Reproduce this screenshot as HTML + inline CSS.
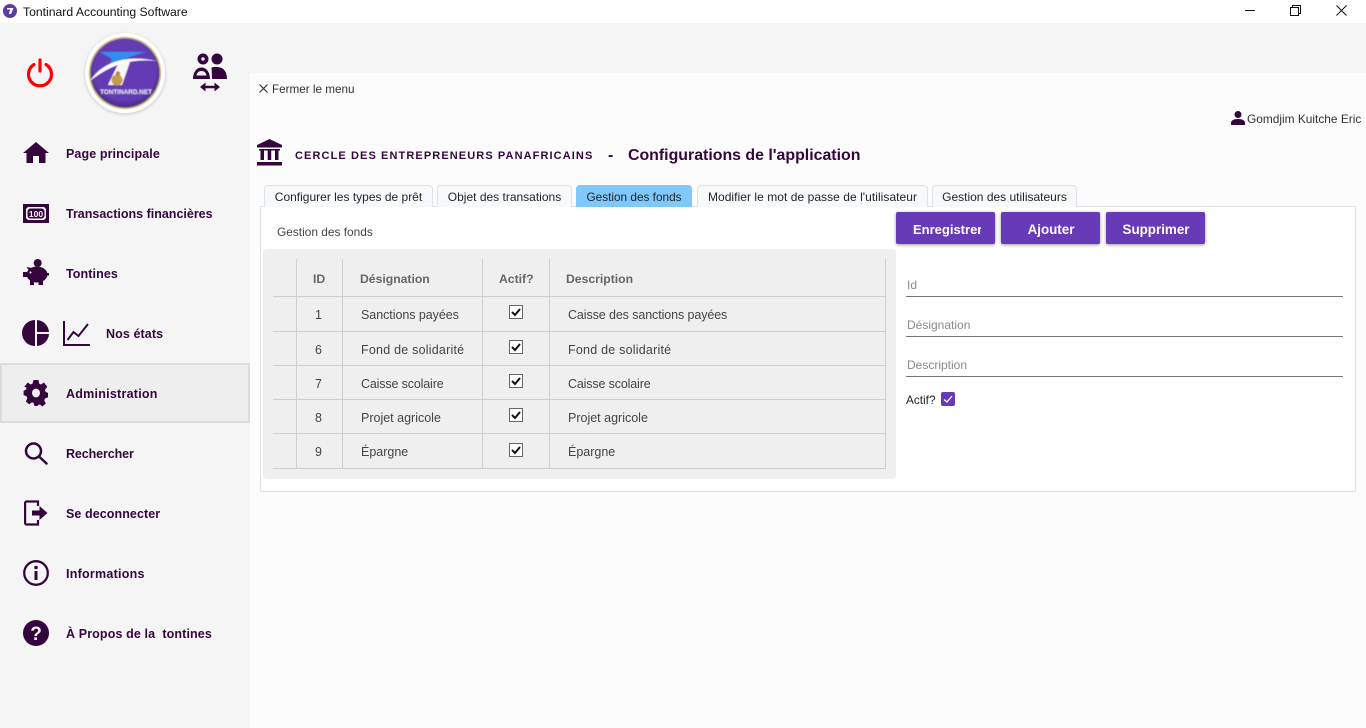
<!DOCTYPE html>
<html lang="fr"><head><meta charset="utf-8"><title>Tontinard Accounting Software</title>
<style>
*{box-sizing:border-box}
html,body{margin:0;padding:0;width:1366px;height:728px;overflow:hidden;background:#fcfcfd;font-family:"Liberation Sans",sans-serif;}
.a{position:absolute;white-space:nowrap}
svg{position:absolute;display:block;overflow:visible}
.nav{position:absolute;left:66px;font-size:12.5px;font-weight:700;color:#35063e;line-height:16px;white-space:nowrap}
.tab{position:absolute;top:185px;height:22px;border:1px solid #dee2e6;border-bottom:0;border-radius:4px 4px 0 0;background:#f8f9fb;font-size:12px;line-height:22px;text-align:center;color:#212529;white-space:nowrap}
.btn{position:absolute;top:212px;height:32px;width:99px;background:#673ab7;color:#fff;border-radius:2px;box-shadow:0 1px 3px rgba(0,0,0,.4);font-size:13.4px;font-weight:700;line-height:36px;text-align:center;overflow:hidden;padding-left:1px}
.hl{position:absolute;height:1px;background:#cfcfcf;left:273px;width:613px}
.vl{position:absolute;width:1px;background:#cfcfcf;top:259px;height:210px}
.th{position:absolute;top:271px;font-size:12.2px;font-weight:700;color:#666;line-height:16px;white-space:nowrap}
.td{position:absolute;font-size:12.5px;color:#444;line-height:16px;white-space:nowrap}
.lbl{position:absolute;left:907px;font-size:12px;color:#8a8a8a;line-height:16px}
.ul{position:absolute;left:906px;width:437px;height:1px;background:#777}
</style></head><body>

<!-- title bar -->
<div class="a" style="left:0;top:0;width:1366px;height:23px;background:#fff"></div>
<svg style="left:3px;top:4px" width="14" height="14" viewBox="0 0 14 14"><circle cx="7" cy="7" r="7" fill="#5d3aa8"/><path d="M4 4h6.500L8 10H5.800L7.200 5.500H4z" fill="#fff"/></svg>
<div class="a" style="left:23px;top:4px;font-size:12.2px;line-height:16px;color:#111">Tontinard Accounting Software</div>
<div class="a" style="left:1245px;top:10px;width:10px;height:1px;background:#111"></div>
<svg style="left:1290px;top:5px" width="11" height="11" viewBox="0 0 11 11" fill="none" stroke="#111"><rect x=".5" y="2.500" width="8" height="8" fill="#fff"/><path d="M2.500 2.500V.5h8v8H8.500"/></svg>
<svg style="left:1336px;top:5px" width="11" height="11" viewBox="0 0 11 11" fill="none" stroke="#111"><path d="M.5.5l10 10M10.500.5l-10 10"/></svg>

<!-- sidebar & top strip -->
<div class="a" style="left:0;top:23px;width:250px;height:705px;background:#f5f5f5"></div>
<div class="a" style="left:250px;top:23px;width:1116px;height:50px;background:#f5f5f5"></div>

<!-- power -->
<svg style="left:26px;top:58px" width="28" height="28" viewBox="0 0 28 28" fill="none" stroke="#f00" stroke-width="3.200" stroke-linecap="round"><path d="M14 2v11"/><path d="M8 6.500a11.500 11.500 0 1 0 12 0"/></svg>

<!-- logo -->
<svg style="left:84px;top:32px" width="84" height="84" viewBox="0 0 84 84">
<defs>
<filter id="b" x="-10%" y="-10%" width="120%" height="120%"><feGaussianBlur stdDeviation="1.200"/></filter>
<filter id="c" x="-5%" y="-5%" width="110%" height="110%"><feGaussianBlur stdDeviation=".45"/></filter>
<radialGradient id="g" cx=".5" cy=".45" r=".55"><stop offset=".8" stop-color="#653bb5"/><stop offset="1" stop-color="#4a2c80"/></radialGradient>
</defs>
<circle cx="41" cy="42" r="41" fill="#d8d8d8" filter="url(#b)"/>
<circle cx="41" cy="41" r="40" fill="#fff"/>
<g filter="url(#c)">
<circle cx="41" cy="41" r="36" fill="#bdb26b"/>
<circle cx="41" cy="41" r="34.500" fill="url(#g)"/>
<path d="M16 20L62 20C50 23 38 27 25 35L28 27Z" fill="#2f8fef"/>
<path d="M6 49C18 31 40 22 73 29C46 26 26 33 6 49z" fill="#fff"/>
<path d="M35 30L46 30L38 53L24 53Z" fill="#f8f8f8"/>
<ellipse cx="33" cy="48" rx="5.500" ry="5.500" fill="#c89a4c"/><circle cx="34" cy="41.500" r="2.200" fill="#b68236"/>
<text x="16" y="62" font-family="Liberation Sans" font-size="6" font-weight="700" fill="#e8e6f0" textLength="52" lengthAdjust="spacingAndGlyphs">TONTINARD.NET</text>
</g>
</svg>

<!-- users swap -->
<svg style="left:193px;top:54px" width="34" height="38" viewBox="0 0 34 38" fill="#35063e">
<path fill-rule="evenodd" d="M10 -.5a5.500 5.500 0 1 0 0 11A5.500 5.500 0 0 0 10 -.5zm0 3.800a1.700 1.700 0 1 1 0 3.400 1.700 1.700 0 0 1 0-3.400z"/>
<circle cx="24" cy="5" r="5.500"/>
<path fill-rule="evenodd" d="M0 25C0 17.500 4 13.500 8.500 13.500S17 17.500 17 25zM3.500 21.500h10c-.5-3-2.500-4.500-5-4.500s-4.500 1.500-5 4.500z"/>
<path d="M18.500 13.500c4-1.200 9-.8 12 1.700 2.200 2 3.500 5.500 3.500 9.800H19c0-4.500-.3-8-.5-11.500z"/>
<path d="M7 33l5.500-4.500v3.200h9v-3.200L27 33l-5.500 4.500v-3.200h-9v3.200z"/>
</svg>

<!-- nav icons -->
<svg style="left:23px;top:142px" width="26" height="21" viewBox="0 0 26 21" fill="#35063e"><path d="M13 0L0 11h3.500v10h6.500v-7h6v7h6.500V11H26z"/></svg>
<svg style="left:23px;top:204px" width="26" height="19" viewBox="0 0 26 19"><rect width="26" height="19" fill="#35063e"/><path d="M5 3h16l2 2v9l-2 2H5l-2-2V5z" fill="#f5f5f5"/><rect x="4.500" y="4.500" width="17" height="10" rx="3" fill="#35063e"/><text x="13" y="13" text-anchor="middle" font-family="Liberation Sans" font-size="8.500" font-weight="700" fill="#f5f5f5">100</text></svg>
<svg style="left:23px;top:259px" width="26" height="27" viewBox="0 0 26 27" fill="#35063e"><circle cx="14.700" cy="4" r="4"/><ellipse cx="14" cy="15.500" rx="10.500" ry="8"/><rect x="0" y="13" width="5" height="5"/><rect x="22" y="14" width="4" height="2.500"/><rect x="7" y="20" width="4" height="6"/><rect x="15.500" y="20" width="4.500" height="6"/><path d="M3.500 8l5.500 1-2 4z"/><circle cx="7.500" cy="13.500" r="1" fill="#f5f5f5"/></svg>
<svg style="left:23px;top:320px" width="26" height="26" viewBox="0 0 26 26" fill="#35063e"><path d="M12 0v26A13 13 0 0 1 12 0z"/><path d="M14 0a13 13 0 0 1 12 12H14z"/><path d="M14 14h12a13 13 0 0 1-12 12z"/></svg>
<svg style="left:63px;top:321px" width="27" height="25" viewBox="0 0 27 25" fill="none" stroke="#35063e" stroke-width="2"><path d="M1 0v24h26"/><path d="M4.500 19l6-8 5 4 9.500-12"/></svg>

<div class="a" style="left:0;top:363px;width:250px;height:60px;background:#eee;border:2px solid #dcdcdc"></div>

<svg style="left:24px;top:380px" width="24" height="26" viewBox="0 0 24 24" fill="#35063e" preserveAspectRatio="none"><path fill-rule="evenodd" d="M9.500 0h5l.7 3.400 1.800.8L20 2.300l3.300 4-2.300 2.600.5 1.900 2.500 1.200v4l-3 1-.7 1.800 1.500 3-3.500 2.700-2.600-2-1.700.6L13.500 24h-3l-.9-2.900-1.700-.6-2.600 2-3.500-2.700 1.500-3-.7-1.800-3-1v-4l2.500-1.200.5-1.900L.3 6.300l3.400-4 3 1.900 1.800-.8zM12 8a4 4 0 1 0 0 8 4 4 0 0 0 0-8z"/></svg>
<svg style="left:24px;top:441px" width="24" height="24" viewBox="0 0 24 24" fill="none" stroke="#35063e" stroke-width="2.500" stroke-linecap="round"><circle cx="9.500" cy="10" r="7.500"/><path d="M15 15.500l7.500 7"/></svg>
<svg style="left:24px;top:500px" width="24" height="26" viewBox="0 0 24 26" fill="none" stroke="#35063e" stroke-width="2.200"><path d="M14 6V1.500H2.500a1.500 1.500 0 0 0-1.400 1.500v20a1.500 1.500 0 0 0 1.400 1.500H14V20"/><path d="M8 10.500h7.500V6l8 7-8 7v-4.500H8z" fill="#35063e" stroke="none"/></svg>
<svg style="left:23px;top:560px" width="26" height="26" viewBox="0 0 26 26" fill="none"><circle cx="13" cy="13" r="11.800" stroke="#35063e" stroke-width="2.300"/><rect x="11.500" y="11" width="3" height="9" fill="#35063e"/><circle cx="13" cy="7.500" r="1.800" fill="#35063e"/></svg>
<svg style="left:23px;top:620px" width="26" height="26" viewBox="0 0 26 26"><circle cx="13" cy="13" r="13" fill="#35063e"/><text x="13" y="20" text-anchor="middle" font-family="Liberation Sans" font-size="19" font-weight="700" fill="#f5f5f5">?</text></svg>

<div class="nav" style="top:146px;letter-spacing:.1px">Page principale</div>
<div class="nav" style="top:206px">Transactions financières</div>
<div class="nav" style="top:266px;letter-spacing:.1px">Tontines</div>
<div class="nav" style="top:326px;left:106px;letter-spacing:.1px">Nos états</div>
<div class="nav" style="top:386px;letter-spacing:.25px">Administration</div>
<div class="nav" style="top:446px;letter-spacing:-.1px">Rechercher</div>
<div class="nav" style="top:506px;letter-spacing:.08px">Se deconnecter</div>
<div class="nav" style="top:566px;letter-spacing:.25px">Informations</div>
<div class="nav" style="top:626px;letter-spacing:.12px">À Propos de la&nbsp; tontines</div>

<!-- main header -->
<svg style="left:259px;top:84px" width="9" height="9" viewBox="0 0 9 9" fill="none" stroke="#333" stroke-width="1.200"><path d="M.5.5l8 8M8.500.5l-8 8"/></svg>
<div class="a" style="left:272px;top:82px;font-size:11.7px;line-height:16px;color:#333">Fermer le menu</div>

<svg style="left:1231px;top:111px" width="14" height="14" viewBox="0 0 14 14" fill="#35063e"><circle cx="7" cy="3.500" r="3.500"/><path d="M0 14v-2c0-2.500 2.500-4 7-4s7 1.500 7 4v2z"/></svg>
<div class="a" style="left:1247px;top:111px;font-size:11.9px;line-height:16px;color:#333">Gomdjim Kuitche Eric</div>

<svg style="left:257px;top:139px" width="25" height="27" viewBox="0 0 25 27" fill="#35063e"><path d="M12.500 0L25 6v2.500H0V6z"/><rect x="2" y="10" width="21" height="1.500"/><rect x="3.500" y="11" width="3.500" height="10"/><rect x="10.700" y="11" width="3.500" height="10"/><rect x="18" y="11" width="3.500" height="10"/><rect x="0" y="23" width="25" height="3.500"/></svg>
<div class="a" style="left:295px;top:148px;font-size:11px;font-weight:700;line-height:16px;color:#35063e;letter-spacing:1.1px">CERCLE DES ENTREPRENEURS PANAFRICAINS</div>
<div class="a" style="left:608px;top:147px;font-size:16px;font-weight:700;line-height:18px;color:#35063e">-</div>
<div class="a" style="left:628px;top:147px;font-size:15.9px;font-weight:700;line-height:18px;color:#35063e">Configurations de l'application</div>

<!-- tabs -->
<div class="a" style="left:260px;top:206px;width:1096px;height:286px;background:#fff;border:1px solid #dee2e6"></div>
<div class="tab" style="left:264px;width:169px">Configurer les types de prêt</div>
<div class="tab" style="left:437px;width:135px">Objet des transations</div>
<div class="tab" style="left:576px;width:116px;background:#7fc8fa;border-color:#7fc8fa;font-size:11.8px">Gestion des fonds</div>
<div class="tab" style="left:697px;width:231px;letter-spacing:.05px">Modifier le mot de passe de l'utilisateur</div>
<div class="tab" style="left:932px;width:145px">Gestion des utilisateurs</div>

<div class="a" style="left:277px;top:224px;font-size:11.9px;line-height:16px;color:#444">Gestion des fonds</div>

<div class="btn" style="left:896px;padding-left:0"><span style="display:block;width:67.5px;margin-left:17px;overflow:hidden;text-align:left;font-size:13px;white-space:nowrap">Enregistrer</span></div>
<div class="btn" style="left:1001px">Ajouter</div>
<div class="btn" style="left:1106px">Supprimer</div>

<!-- table -->
<div class="a" style="left:263px;top:249px;width:633px;height:230px;background:#efefef;border-radius:4px"></div>
<div class="hl" style="top:296px"></div><div class="hl" style="top:331px"></div><div class="hl" style="top:365px"></div><div class="hl" style="top:399px"></div><div class="hl" style="top:433px"></div><div class="hl" style="top:468px"></div>
<div class="vl" style="left:296px"></div><div class="vl" style="left:342px"></div><div class="vl" style="left:482px"></div><div class="vl" style="left:549px"></div><div class="vl" style="left:885px"></div>

<div class="th" style="left:313px">ID</div>
<div class="th" style="left:360px">Désignation</div>
<div class="th" style="left:499px">Actif?</div>
<div class="th" style="left:566px">Description</div>

<div class="td" style="left:315px;top:307px">1</div><div class="td" style="left:361px;top:307px;letter-spacing:-.05px">Sanctions payées</div><div class="td" style="left:568px;top:307px;letter-spacing:-.1px">Caisse des sanctions payées</div>
<div class="td" style="left:315px;top:342px">6</div><div class="td" style="left:361px;top:342px;letter-spacing:.22px">Fond de solidarité</div><div class="td" style="left:568px;top:342px;letter-spacing:.22px">Fond de solidarité</div>
<div class="td" style="left:315px;top:376px">7</div><div class="td" style="left:361px;top:376px;letter-spacing:-.15px">Caisse scolaire</div><div class="td" style="left:568px;top:376px;letter-spacing:-.15px">Caisse scolaire</div>
<div class="td" style="left:315px;top:410px">8</div><div class="td" style="left:361px;top:410px">Projet agricole</div><div class="td" style="left:568px;top:410px">Projet agricole</div>
<div class="td" style="left:315px;top:444px">9</div><div class="td" style="left:361px;top:444px">Épargne</div><div class="td" style="left:568px;top:444px">Épargne</div>

<svg style="left:509px;top:305px" width="14" height="14" viewBox="0 0 14 14"><rect x=".5" y=".5" width="13" height="13" fill="#fff" stroke="#666"/><path d="M3 7l3 3 5-6" fill="none" stroke="#111" stroke-width="2"/></svg>
<svg style="left:509px;top:340px" width="14" height="14" viewBox="0 0 14 14"><rect x=".5" y=".5" width="13" height="13" fill="#fff" stroke="#666"/><path d="M3 7l3 3 5-6" fill="none" stroke="#111" stroke-width="2"/></svg>
<svg style="left:509px;top:374px" width="14" height="14" viewBox="0 0 14 14"><rect x=".5" y=".5" width="13" height="13" fill="#fff" stroke="#666"/><path d="M3 7l3 3 5-6" fill="none" stroke="#111" stroke-width="2"/></svg>
<svg style="left:509px;top:408px" width="14" height="14" viewBox="0 0 14 14"><rect x=".5" y=".5" width="13" height="13" fill="#fff" stroke="#666"/><path d="M3 7l3 3 5-6" fill="none" stroke="#111" stroke-width="2"/></svg>
<svg style="left:509px;top:443px" width="14" height="14" viewBox="0 0 14 14"><rect x=".5" y=".5" width="13" height="13" fill="#fff" stroke="#666"/><path d="M3 7l3 3 5-6" fill="none" stroke="#111" stroke-width="2"/></svg>

<!-- form -->
<div class="lbl" style="top:277px">Id</div><div class="ul" style="top:296px"></div>
<div class="lbl" style="top:317px">Désignation</div><div class="ul" style="top:336px"></div>
<div class="lbl" style="top:357px">Description</div><div class="ul" style="top:376px"></div>
<div class="a" style="left:906px;top:392px;font-size:11.8px;line-height:16px;color:#222">Actif?</div>
<svg style="left:941px;top:392px" width="14" height="14" viewBox="0 0 14 14"><rect width="14" height="14" rx="2" fill="#673ab7"/><path d="M3 7.500l3 2.500 5-6" fill="none" stroke="#fff" stroke-width="1.300"/></svg>

</body></html>
